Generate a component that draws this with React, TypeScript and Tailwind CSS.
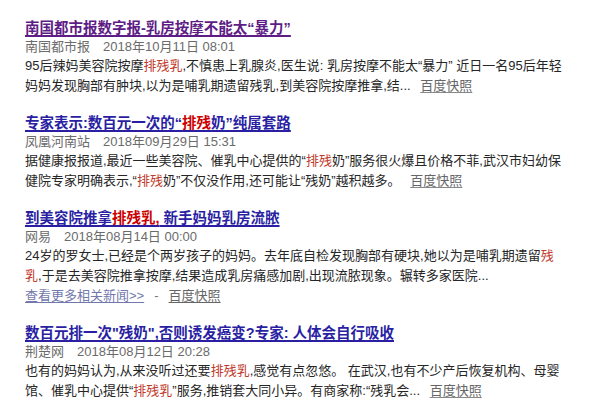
import React from "react";

const R = ({ children, t }: { children: React.ReactNode; t?: boolean }) => (
  <span className={t ? "text-[#cc0000]" : "text-[#c0392b]"}>{children}</span>
);

const Snap = () => (
  <a className="text-[#666666] underline underline-offset-2 decoration-[#888] ml-[6px]">百度快照</a>
);

type Item = {
  title: React.ReactNode;
  visited?: boolean;
  source: string;
  date: string;
  lines: React.ReactNode[];
  more?: boolean;
};

const items: Item[] = [
  {
    visited: true,
    title: <>南国都市报数字报-乳房按摩不能太“暴力”</>,
    source: "南国都市报",
    date: "2018年10月11日 08:01",
    lines: [
      <>95后辣妈美容院按摩<R>排残乳</R>,不慎患上乳腺炎,医生说: 乳房按摩不能太“暴力” 近日一名95后年轻</>,
      <>妈妈发现胸部有肿块,以为是哺乳期遗留残乳,到美容院按摩推拿,结... <Snap /></>,
    ],
  },
  {
    title: (
      <>
        专家表示:数百元一次的“<R t>排残</R>奶”纯属套路
      </>
    ),
    source: "凤凰河南站",
    date: "2018年09月29日 15:31",
    lines: [
      <>据健康报报道,最近一些美容院、催乳中心提供的“<R>排残</R>奶”服务很火爆且价格不菲,武汉市妇幼保</>,
      <>健院专家明确表示,“<R>排残</R>奶”不仅没作用,还可能让“残奶”越积越多。 <Snap /></>,
    ],
  },
  {
    title: (
      <>
        到美容院推拿<R t>排残乳,</R> 新手妈妈乳房流脓
      </>
    ),
    source: "网易",
    date: "2018年08月14日 00:00",
    more: true,
    lines: [
      <>24岁的罗女士,已经是个两岁孩子的妈妈。去年底自检发现胸部有硬块,她以为是哺乳期遗留<R>残</R></>,
      <><R>乳</R>,于是去美容院推拿按摩,结果造成乳房痛感加剧,出现流脓现象。辗转多家医院...</>,
    ],
  },
  {
    title: <>数百元排一次"残奶",否则诱发癌变?专家: 人体会自行吸收</>,
    source: "荆楚网",
    date: "2018年08月12日 20:28",
    lines: [
      <>也有的妈妈认为,从来没听过还要<R>排残乳</R>,感觉有点忽悠。 在武汉,也有不少产后恢复机构、母婴</>,
      <>馆、催乳中心提供“<R>排残乳</R>”服务,推销套大同小异。有商家称:“残乳会... <Snap /></>,
    ],
  },
];

export default function App() {
  return (
    <div
      className="w-[605px] h-[411px] overflow-hidden bg-white pl-[25px] pt-[18px] flex flex-col gap-[17px]"
      style={{ fontFamily: '"Liberation Sans", Arial, "Noto Sans CJK SC", sans-serif' }}
    >
      {items.map((it, i) => (
        <div key={i} className="flex flex-col whitespace-nowrap">
          <a
            className={
              "text-[14.5px] leading-[20px] font-bold underline underline-offset-[2px] decoration-[1.5px] " +
              (it.visited ? "text-[#5e1c86]" : "text-[#2a1fa3]")
            }
          >
            {it.title}
          </a>
          <div className="text-[13px] leading-[18px] text-[#6b6b6b]">
            <span>{it.source}</span>
            <span className="ml-[13px]">{it.date}</span>
          </div>
          {it.lines.map((l, j) => (
            <div key={j} className="text-[13px] leading-[20px] text-[#262626]">
              {l}
            </div>
          ))}
          {it.more && (
            <div className="text-[13px] leading-[20px] text-[#777]">
              <a className="text-[#7278ac] underline underline-offset-2">查看更多相关新闻&gt;&gt;</a>
              <span className="mx-[10px]">-</span>
              <a className="text-[#666666] underline underline-offset-2">百度快照</a>
            </div>
          )}
        </div>
      ))}
    </div>
  );
}
